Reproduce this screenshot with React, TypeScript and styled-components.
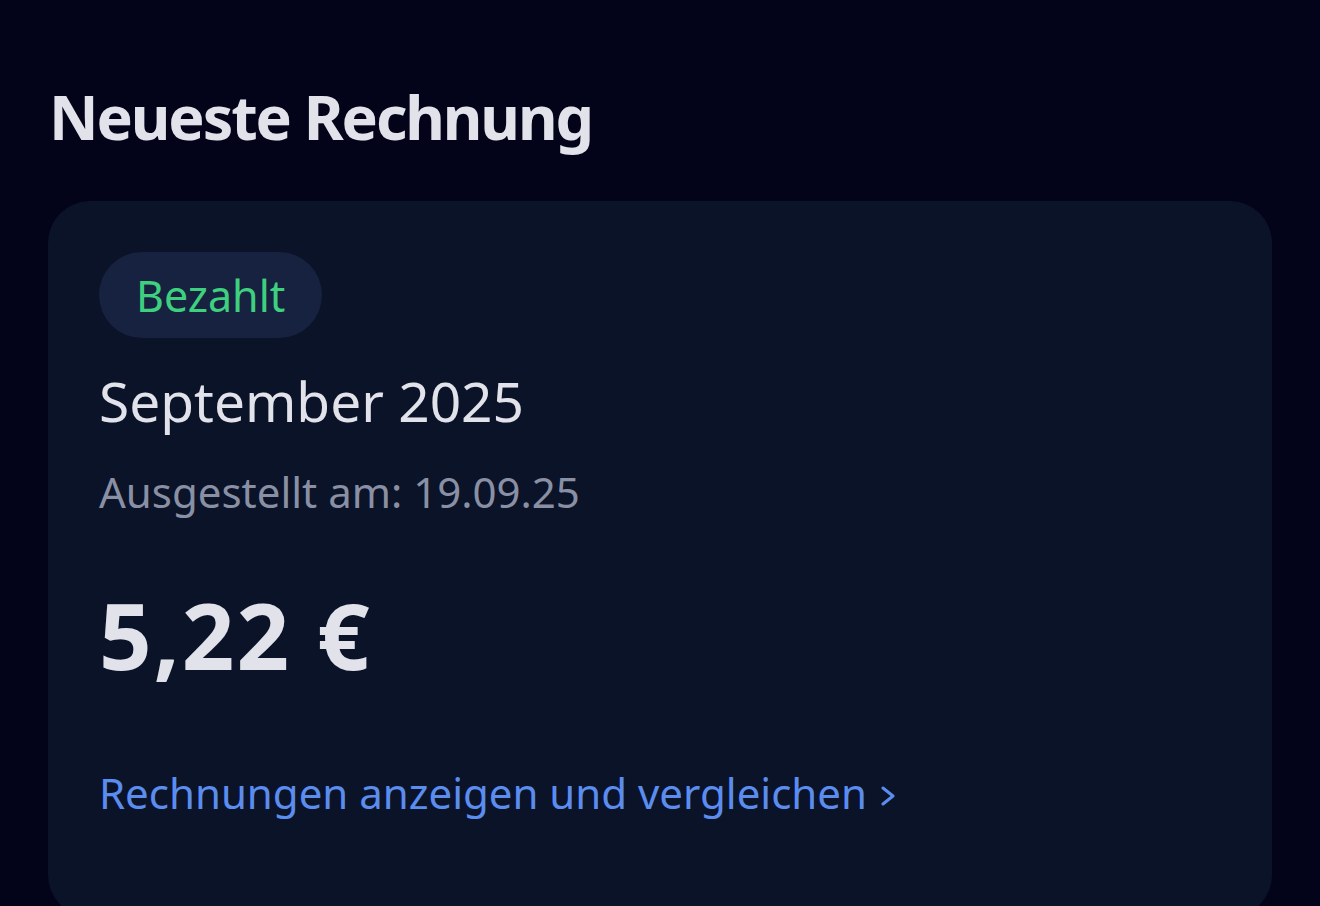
import styled, { createGlobalStyle } from "styled-components";

const GlobalStyle = createGlobalStyle`
  html, body {
    margin: 0;
    padding: 0;
    background: #03031a;
    overflow: hidden;
  }
  body {
    font-family: "Noto Sans", "Open Sans", sans-serif;
    color: #e2e2ea;
  }
`;

const App = () => {
  return (
    <>
      <GlobalStyle />
      <Page>
        <SectionTitle>Neueste Rechnung</SectionTitle>
        <InvoiceCard>
          <StatusBadge>Bezahlt</StatusBadge>
          <Period>September 2025</Period>
          <IssuedDate>Ausgestellt am: 19.09.25</IssuedDate>
          <Amount>5,22 €</Amount>
          <CompareLink href="#">
            Rechnungen anzeigen und vergleichen
            <Chevron viewBox="0 0 16 20" aria-hidden="true">
              <path d="M3 2l10 8-10 8" />
            </Chevron>
          </CompareLink>
        </InvoiceCard>
      </Page>
    </>
  );
};

export default App;

const Page = styled.div`
  width: 1320px;
  height: 906px;
  box-sizing: border-box;
  padding: 78px 48px 0 48px;
`;

const SectionTitle = styled.h1`
  margin: 0 0 0 1px;
  font-size: 61px;
  line-height: 78px;
  font-weight: 700;
  letter-spacing: -2.1px;
  color: #e2e2ea;
`;

const InvoiceCard = styled.div`
  margin-top: 45px;
  height: 716px;
  box-sizing: border-box;
  background: #0b1329;
  border-radius: 42px;
  padding: 51px 51px 0 51px;
  display: flex;
  flex-direction: column;
  align-items: flex-start;
`;

const StatusBadge = styled.span`
  display: inline-flex;
  align-items: center;
  justify-content: center;
  height: 86px;
  padding: 0 37px;
  border-radius: 43px;
  background: #16223f;
  color: #3fd07f;
  font-size: 43px;
`;

const Period = styled.div`
  margin-top: 26px;
  font-size: 55px;
  line-height: 74px;
  color: #e2e2ea;
`;

const IssuedDate = styled.div`
  margin-top: 24px;
  font-size: 42px;
  line-height: 60px;
  color: #8a90a3;
`;

const Amount = styled.div`
  margin-top: 58px;
  font-size: 92px;
  line-height: 110px;
  font-weight: 700;
  letter-spacing: 2px;
  color: #e2e2ea;
`;

const CompareLink = styled.a`
  margin-top: 75px;
  display: inline-flex;
  align-items: center;
  gap: 13px;
  font-size: 42px;
  line-height: 56px;
  color: #5b8def;
  text-decoration: none;
`;

const Chevron = styled.svg`
  width: 16px;
  height: 20px;
  margin-top: 6px;
  fill: none;
  stroke: #5b8def;
  stroke-width: 3;
  stroke-linecap: round;
  stroke-linejoin: round;
`;
